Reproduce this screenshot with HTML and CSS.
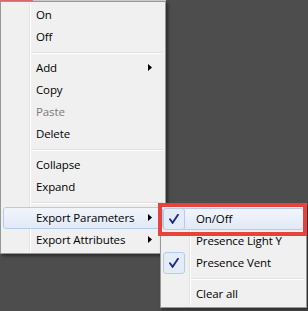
FILE: index.html
```html
<!DOCTYPE html>
<html lang="en">
<head>
    <meta charset="UTF-8">
    <title>Context menu</title>
    <link rel="stylesheet" href="styles.css">
</head>
<body>
    <div class="topedge"><span class="topedge-red"></span></div>
    <div class="menu">
        <div class="item">On</div>
        <div class="item">Off</div>
        <div class="sep"></div>
        <div class="item has-sub">Add</div>
        <div class="item">Copy</div>
        <div class="item disabled">Paste</div>
        <div class="item">Delete</div>
        <div class="sep"></div>
        <div class="item">Collapse</div>
        <div class="item">Expand</div>
        <div class="sep"></div>
        <div class="item has-sub active">Export Parameters</div>
        <div class="item has-sub">Export Attributes</div>
    </div>

    <div class="submenu">
        <div class="item active">
            <span class="check"><svg width="10" height="10" viewBox="0 0 10 10"><path d="M1 5.2 L3.6 8.8 L9 0.8" /></svg></span>
            On/Off
        </div>
        <div class="item">Presence Light Y</div>
        <div class="item">
            <span class="check"><svg width="10" height="10" viewBox="0 0 10 10"><path d="M1 5.2 L3.6 8.8 L9 0.8" /></svg></span>
            Presence Vent
        </div>
        <div class="sep"></div>
        <div class="item">Clear all</div>
    </div>

    <div class="callout"></div>
</body>
</html>
```

FILE: styles.css
```css
* {
    box-sizing: border-box;
}
html, body {
    margin: 0;
    padding: 0;
}
body {
    width: 308px;
    height: 311px;
    overflow: hidden;
    background: #4d4d4d;
    font-family: "Open Sans", "Noto Sans", Arial, sans-serif;
    font-size: 11.5px;
    letter-spacing: -0.12px;
    color: #000;
    position: relative;
}

/* strip of the window behind, cut off at the top */
.topedge {
    height: 1px;
    width: 166px;
    background: #cfcfcf;
}
.topedge-red {
    display: block;
    width: 33px;
    height: 1px;
    background: #e26a6a;
}

.menu,
.submenu {
    background: #f0f0f0;
    border: 1px solid #979797;
    padding: 2px;
    position: relative;
}
.menu {
    width: 166px;
    box-shadow: 2px 2px 3px rgba(0, 0, 0, 0.45);
}
.submenu {
    position: absolute;
    left: 160px;
    top: 205px;
    width: 147px;
    box-shadow: 2px 2px 3px rgba(0, 0, 0, 0.45);
}

/* icon gutter line */
.menu::before,
.submenu::before {
    content: "";
    position: absolute;
    left: 28px;
    top: 2px;
    bottom: 2px;
    width: 1px;
    background: #e2e3e3;
    box-shadow: 1px 0 0 #fff;
}

.item {
    position: relative;
    height: 22px;
    line-height: 20px;
    padding-left: 32px;
    white-space: nowrap;
    border: 1px solid transparent;
    border-radius: 3px;
}
.item.disabled {
    color: #7a7a7a;
}
.item.active {
    background: linear-gradient(#f1f5fb, #e2eaf6);
    border-color: #b2cdec;
    z-index: 1;
}
.item.has-sub::after {
    content: "";
    position: absolute;
    right: 10px;
    top: 6px;
    width: 4px;
    height: 7px;
    background: #000;
    clip-path: polygon(0 0, 100% 50%, 0 100%);
}

.sep {
    position: relative;
    height: 9px;
    margin-left: 28px;
}
.sep::before {
    content: "";
    position: absolute;
    left: 0;
    right: 0;
    top: 4px;
    height: 1px;
    background: #e0e0e0;
    box-shadow: 0 1px 0 #fff;
}

.check {
    position: absolute;
    left: -1px;
    top: -1px;
    width: 22px;
    height: 22px;
    border: 1px solid #b2cdec;
    border-radius: 3px;
    background: #e4ecf8;
    display: flex;
    align-items: center;
    justify-content: center;
}
.check svg path {
    fill: none;
    stroke: #1f2a8e;
    stroke-width: 1.9;
    stroke-linecap: round;
    stroke-linejoin: miter;
}

/* red annotation rectangle */
.callout {
    position: absolute;
    left: 158px;
    top: 203px;
    width: 149px;
    height: 33px;
    border: 4px solid #e8423d;
    z-index: 5;
}
```
